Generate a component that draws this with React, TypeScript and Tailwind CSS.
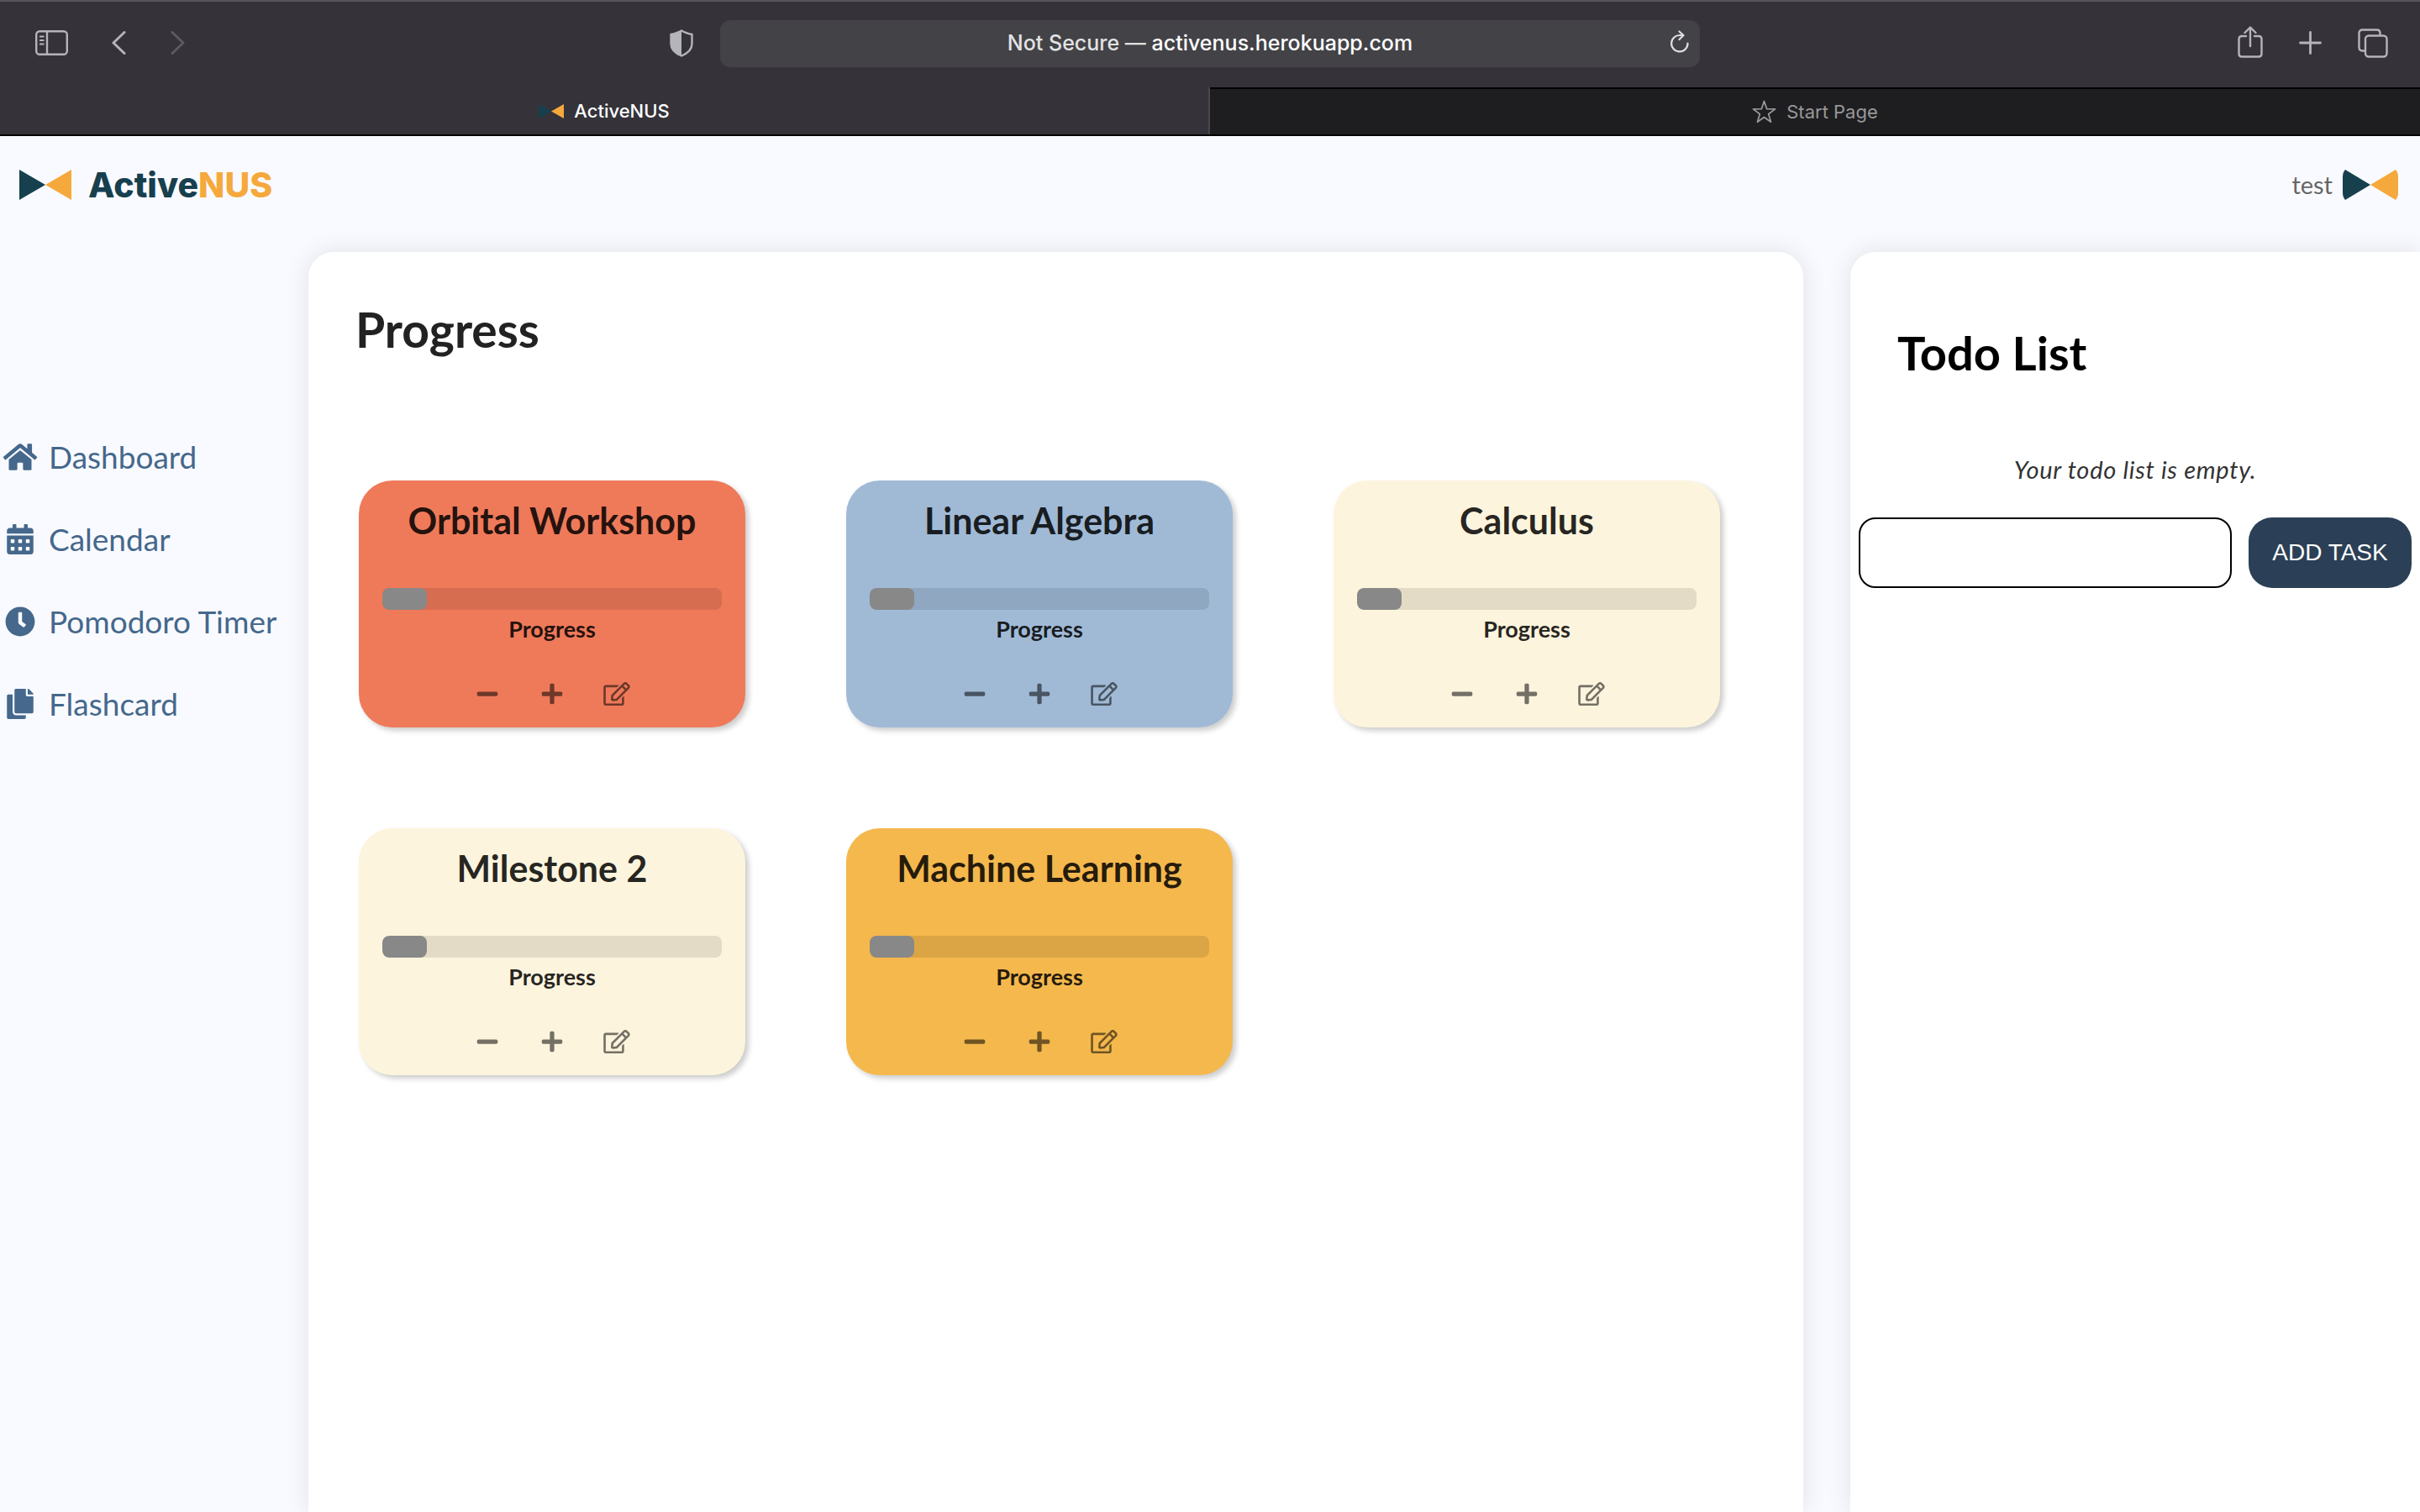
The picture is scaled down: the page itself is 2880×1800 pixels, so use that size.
import React, { useState } from "react";
import { FaCalendarAlt, FaClock, FaCopy, FaHome, FaMinus, FaPlus, FaRegEdit } from "react-icons/fa";

const navItems = [
  { label: "Dashboard", icon: FaHome },
  { label: "Calendar", icon: FaCalendarAlt },
  { label: "Pomodoro Timer", icon: FaClock },
  { label: "Flashcard", icon: FaCopy },
];

const initialCards = [
  { title: "Orbital Workshop", color: "bg-[#ef7a5a]", progress: 13 },
  { title: "Linear Algebra", color: "bg-[#a0bad6]", progress: 13 },
  { title: "Calculus", color: "bg-[#fdf4dd]", progress: 13 },
  { title: "Milestone 2", color: "bg-[#fdf4dd]", progress: 13 },
  { title: "Machine Learning", color: "bg-[#f4b84d]", progress: 13 },
];

function BowTie({ className }: { className: string }) {
  return (
    <svg viewBox="0 0 62 36" preserveAspectRatio="none" className={className} aria-hidden="true">
      <path d="M0 0L31 18L0 36Z" fill="#17404e" />
      <path d="M62 0L31 18L62 36Z" fill="#f5a93c" />
    </svg>
  );
}

function Avatar() {
  return (
    <svg viewBox="0 0 66 36" className="h-9 w-[66px]" aria-hidden="true">
      <path d="M3 0L33 18L3 36Q0 33 0 27V9Q0 3 3 0Z" fill="#17404e" />
      <path d="M63 0L33 18L63 36Q66 33 66 27V9Q66 3 63 0Z" fill="#f5a93c" />
    </svg>
  );
}

function BrowserBar() {
  return (
    <header className="border-t-2 border-[#57565b] bg-[#353339] font-[Inter,sans-serif] text-[#b5b4ba]">
      <div className="grid h-[102px] grid-cols-[1fr_minmax(0,1166px)_1fr] items-start pt-[22px]">
        <div className="flex h-14 items-center justify-between pr-8 pb-0.5 pl-[42px]">
          <div className="flex items-center">
            <button aria-label="Show sidebar">
              <svg width="39" height="30" viewBox="0 0 39 30" fill="none" stroke="currentColor" strokeWidth="2.4">
                <rect x="1.2" y="1.2" width="36.6" height="27.6" rx="4" />
                <path d="M14 1V29" />
                <path d="M5 7.5H10.5M5 12H10.5M5 16.5H10.5" strokeWidth="2" />
              </svg>
            </button>
            <button aria-label="Back" className="ml-[52px]">
              <svg width="17" height="28" viewBox="0 0 17 28" fill="none" stroke="currentColor" strokeWidth="3" strokeLinecap="round" strokeLinejoin="round">
                <path d="M15 1.5L2 14L15 26.5" />
              </svg>
            </button>
            <button aria-label="Forward" className="ml-[53px] text-[#5b5a60]">
              <svg width="17" height="28" viewBox="0 0 17 28" fill="none" stroke="currentColor" strokeWidth="3" strokeLinecap="round" strokeLinejoin="round">
                <path d="M2 1.5L15 14L2 26.5" />
              </svg>
            </button>
          </div>
          <button aria-label="Privacy report">
            <svg width="28" height="33" viewBox="0 0 28 33">
              <path d="M14 1.5C18 4 22 5 26.5 6V17C26.5 24 20 29 14 31.5C8 29 1.5 24 1.5 17V6C6 5 10 4 14 1.5Z" fill="none" stroke="currentColor" strokeWidth="2.4" />
              <path d="M14 1C10 4 6 5 1 6V17C1 24 8 29 14 32Z" fill="currentColor" />
            </svg>
          </button>
        </div>
        <div className="flex h-14 items-center rounded-xl bg-[#434247] pr-3 pl-9">
          <p className="flex-1 text-center text-[25px] font-medium text-[#e2e2e3]">
            Not Secure — <span className="text-white">activenus.herokuapp.com</span>
          </p>
          <button aria-label="Reload" className="pb-1 text-[#dededf]">
            <svg width="24" height="28" viewBox="0 0 24 28" fill="none" stroke="currentColor" strokeWidth="2.2" strokeLinecap="round" strokeLinejoin="round">
              <path d="M21.5 15.5A9.7 9.7 0 1 1 12 6H16" />
              <path d="M11.5 1.5L16.5 6L11.5 11" />
            </svg>
          </button>
        </div>
        <div className="flex h-14 items-center justify-end gap-[43px] pr-[38px] pb-0.5">
          <button aria-label="Share">
            <svg width="30" height="41" viewBox="0 0 30 41" fill="none" stroke="currentColor" strokeWidth="2.4" strokeLinecap="round" strokeLinejoin="round">
              <path d="M10 12H5Q1.5 12 1.5 15.5V33Q1.5 36.5 5 36.5H25Q28.5 36.5 28.5 33V15.5Q28.5 12 25 12H20" />
              <path d="M15 24V2M8.5 8L15 1.5L21.5 8" />
            </svg>
          </button>
          <button aria-label="New tab">
            <svg width="27" height="28" viewBox="0 0 27 28" fill="none" stroke="currentColor" strokeWidth="2.8" strokeLinecap="round">
              <path d="M13.5 1.5V26.5M1.500 14H25.500" />
            </svg>
          </button>
          <button aria-label="Show all tabs">
            <svg width="36" height="35" viewBox="0 0 36 35" fill="none" stroke="currentColor" strokeWidth="2.4" strokeLinejoin="round">
              <rect x="9" y="8.5" width="25.5" height="25" rx="4" />
              <path d="M9 26.5H5.5Q1.5 26.5 1.5 22.5V5.5Q1.5 1.5 5.5 1.5H22.5Q26.5 1.5 26.5 5.5V8.5" />
            </svg>
          </button>
        </div>
      </div>
      <div className="flex h-[58px] border-b-2 border-black text-[22px]">
        <button className="flex w-1/2 items-center justify-center gap-3 border-r-2 border-[#47464b] font-medium text-white">
          <BowTie className="h-[17px] w-[30px]" />
          ActiveNUS
        </button>
        <button className="flex w-1/2 items-center justify-center gap-3 border-t-2 border-black bg-[#1e1e20] text-[#98989a]">
          <svg width="29" height="28" viewBox="0 0 29 28" fill="none" stroke="currentColor" strokeWidth="1.8" strokeLinejoin="round">
            <path d="M14.5 1.5L17.7 10.7L27.5 10.9L19.7 16.8L22.5 26.2L14.5 20.6L6.5 26.2L9.3 16.8L1.5 10.9L11.3 10.7Z" />
          </svg>
          Start Page
        </button>
      </div>
    </header>
  );
}

function ProgressCard({ card, onStep }: { card: (typeof initialCards)[number]; onStep: (by: number) => void }) {
  return (
    <article className={`flex h-[294px] w-[460px] flex-col items-center rounded-[40px] px-7 pt-[22px] shadow-[4px_4px_6px_rgba(0,0,0,0.2)] ${card.color}`}>
      <h2 className="text-[43px] leading-[52px] font-bold text-black/87">{card.title}</h2>
      <div className="mt-[54px] h-[26px] w-full overflow-hidden rounded-lg bg-black/10">
        <div className="h-full rounded-lg bg-[#888888]" style={{ width: `${card.progress}%` }} />
      </div>
      <p className="mt-[7px] text-[27px] leading-8 font-bold text-black/87">Progress</p>
      <div className="mt-[47px] grid w-[232px] grid-cols-3 justify-items-center text-[28px] text-black/54">
        <button aria-label={`Decrease ${card.title}`} onClick={() => onStep(-1)}>
          <FaMinus />
        </button>
        <button aria-label={`Increase ${card.title}`} onClick={() => onStep(1)}>
          <FaPlus />
        </button>
        <button aria-label={`Edit ${card.title}`}>
          <FaRegEdit className="w-8" />
        </button>
      </div>
    </article>
  );
}

export default function App() {
  const [cards, setCards] = useState(initialCards);
  const step = (index: number, by: number) =>
    setCards(cards.map((c, i) => (i === index ? { ...c, progress: Math.min(100, Math.max(0, c.progress + by)) } : c)));

  return (
    <div className="flex h-screen flex-col overflow-hidden bg-[#f9faff] font-[Lato,sans-serif]">
      <BrowserBar />
      <div className="flex h-[138px] shrink-0 items-start justify-between pt-[26px] pr-[26px] pl-[23px]">
        <a href="#home" className="flex h-16 items-center gap-5 font-[Inter,sans-serif] text-[41px] font-extrabold text-[#17404e]">
          <BowTie className="h-9 w-[62px]" />
          <span className="pt-0.5">
            Active<span className="text-[#f5a93c]">NUS</span>
          </span>
        </a>
        <a href="#account" className="flex h-16 items-center gap-3 text-[29px] text-[#666666]">
          test
          <Avatar />
        </a>
      </div>
      <div className="flex flex-1">
        <nav className="w-[367px] shrink-0 pt-[195px]">
          <ul>
            {navItems.map(({ label, icon: Icon }) => (
              <li key={label}>
                <a href={`#${label}`} className="flex h-[98px] items-center gap-[10px] text-[37px] text-[#45688c]">
                  <span className="flex w-12 justify-center">
                    <Icon className="h-9 w-11" />
                  </span>
                  {label}
                </a>
              </li>
            ))}
          </ul>
        </nav>
        <main className="flex-1 rounded-t-[30px] bg-white pt-[58px] pl-[60px] shadow-[0_0_30px_rgba(0,0,0,0.1)]">
          <h1 className="-ml-1 text-[57px] leading-[68px] font-bold text-[#222222]">Progress</h1>
          <div className="mt-[146px] flex flex-wrap gap-[120px]">
            {cards.map((card, i) => (
              <ProgressCard key={card.title} card={card} onStep={(by) => step(i, by)} />
            ))}
          </div>
        </main>
        <aside className="ml-14 w-[678px] shrink-0 rounded-tl-[30px] bg-white pt-[86px] shadow-[0_0_30px_rgba(0,0,0,0.1)]">
          <h2 className="pl-14 text-[56px] leading-[68px] font-bold text-black">Todo List</h2>
          <p className="mt-[87px] text-center text-[29px] leading-9 tracking-wide text-[#333333] italic">Your todo list is empty.</p>
          <form className="mt-[39px] flex gap-5 px-[10px]" onSubmit={(e) => e.preventDefault()}>
            <input aria-label="New task" className="h-[84px] min-w-0 flex-1 rounded-[20px] border-2 border-black px-5 text-[28px]" />
            <button className="h-[84px] w-[194px] rounded-[28px] bg-[#2b4056] font-['Liberation_Sans',sans-serif] text-[28px] text-white">ADD TASK</button>
          </form>
        </aside>
      </div>
    </div>
  );
}
